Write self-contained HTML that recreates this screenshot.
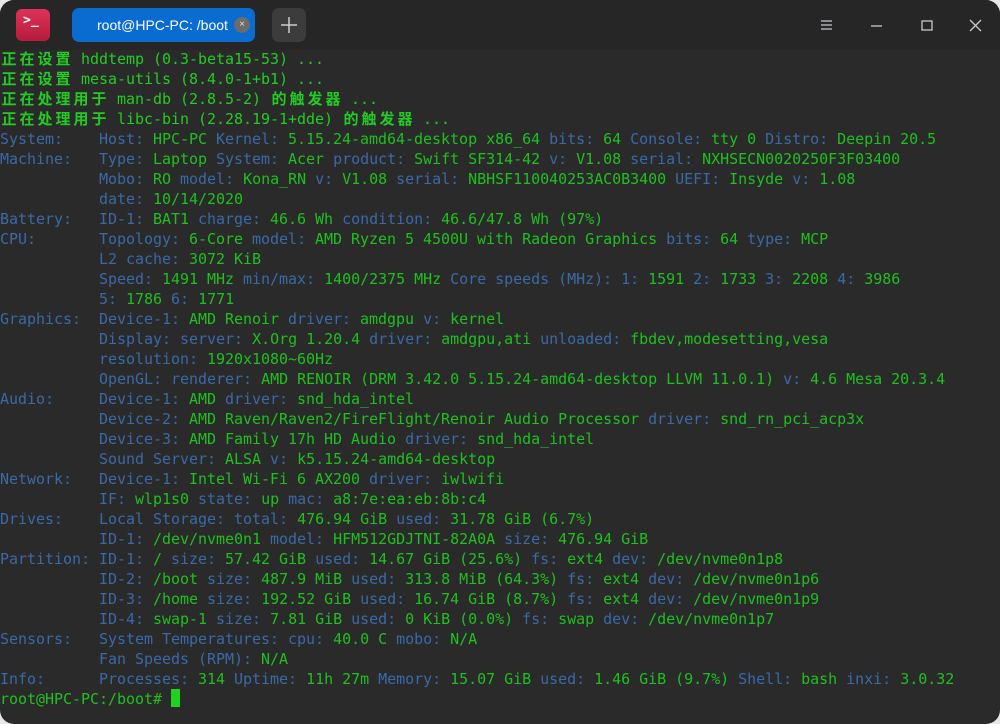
<!DOCTYPE html>
<html><head><meta charset="utf-8"><style>
html,body{margin:0;padding:0;background:#e8e8e8;}
.win{position:absolute;left:0;top:0;width:1000px;height:724px;background:#2a2a2a;border-radius:14px;overflow:hidden;}
.tb{position:absolute;left:0;top:0;width:1000px;height:50px;background:#262626;}
.logo{position:absolute;left:16px;top:9px;width:34px;height:32px;border-radius:6px;background:linear-gradient(#e0325a,#b51c3c);color:#fff;font:bold 13px "DejaVu Sans Mono",monospace;}
.tab{position:absolute;left:72px;top:8px;width:183px;height:34px;border-radius:7px;background:#0a6bd1;color:#fff;font:14px "Liberation Sans",sans-serif;line-height:34px;}
.tab span{position:absolute;left:25px;}
.x{position:absolute;left:162px;top:9px;width:16px;height:16px;border-radius:8px;background:#6b6b6b;color:#ddd;font:10px sans-serif;line-height:16px;text-align:center;}
.plus{position:absolute;left:272px;top:8px;width:34px;height:34px;border-radius:7px;background:#3c3c3c;}
.term{position:absolute;left:0;top:49px;font-family:"DejaVu Sans Mono","Noto Sans CJK SC",monospace;font-size:15px;letter-spacing:-0.03px;line-height:20px;white-space:pre;color:#1ec01e;}
.b{color:#3a69a8}.c{color:#22cc22}
.c i{font-style:normal;font-weight:bold;display:inline-block;width:18px;text-align:center;}
.cur{display:inline-block;width:9px;height:18px;background:#1ed21e;vertical-align:-3px;}
</style></head><body><div class="win">
<div class="tb">
<div class="logo"><span style="position:absolute;left:7px;top:4px">&gt;_</span></div>
<div class="tab"><span>root@HPC-PC: /boot</span><div class="x">×</div></div>
<div class="plus"><svg width="34" height="34" stroke="#ccc" stroke-width="1.5"><path d="M17 9v16M9 17h16"/></svg></div>
<svg style="position:absolute;left:815px;top:15px" width="175" height="20" fill="none" stroke="#c8c8d0" stroke-width="1.3">
<path d="M6 6h11M6 10h11M6 14h11"/><path d="M56 11h11"/><rect x="107" y="6" width="10" height="9"/><path d="M155 5l11 11M166 5l-11 11"/></svg>
</div>
<div class="term"><span class="c"><i>正</i><i>在</i><i>设</i><i>置</i> hddtemp (0.3-beta15-53) ...
<i>正</i><i>在</i><i>设</i><i>置</i> mesa-utils (8.4.0-1+b1) ...
<i>正</i><i>在</i><i>处</i><i>理</i><i>用</i><i>于</i> man-db (2.8.5-2) <i>的</i><i>触</i><i>发</i><i>器</i> ...
<i>正</i><i>在</i><i>处</i><i>理</i><i>用</i><i>于</i> libc-bin (2.28.19-1+dde) <i>的</i><i>触</i><i>发</i><i>器</i> ...</span>
<span class="b">System:    Host:</span> HPC-PC <span class="b">Kernel:</span> 5.15.24-amd64-desktop x86_64 <span class="b">bits:</span> 64 <span class="b">Console:</span> tty 0 <span class="b">Distro:</span> Deepin 20.5
<span class="b">Machine:   Type:</span> Laptop <span class="b">System:</span> Acer <span class="b">product:</span> Swift SF314-42 <span class="b">v:</span> V1.08 <span class="b">serial:</span> NXHSECN0020250F3F03400
           <span class="b">Mobo:</span> RO <span class="b">model:</span> Kona_RN <span class="b">v:</span> V1.08 <span class="b">serial:</span> NBHSF110040253AC0B3400 <span class="b">UEFI:</span> Insyde <span class="b">v:</span> 1.08
           <span class="b">date:</span> 10/14/2020
<span class="b">Battery:   ID-1:</span> BAT1 <span class="b">charge:</span> 46.6 Wh <span class="b">condition:</span> 46.6/47.8 Wh (97%)
<span class="b">CPU:       Topology:</span> 6-Core <span class="b">model:</span> AMD Ryzen 5 4500U with Radeon Graphics <span class="b">bits:</span> 64 <span class="b">type:</span> MCP
           <span class="b">L2 cache:</span> 3072 KiB
           <span class="b">Speed:</span> 1491 MHz <span class="b">min/max:</span> 1400/2375 MHz <span class="b">Core speeds (MHz): 1:</span> 1591 <span class="b">2:</span> 1733 <span class="b">3:</span> 2208 <span class="b">4:</span> 3986
           <span class="b">5:</span> 1786 <span class="b">6:</span> 1771
<span class="b">Graphics:  Device-1:</span> AMD Renoir <span class="b">driver:</span> amdgpu <span class="b">v:</span> kernel
           <span class="b">Display:</span> <span class="b">server:</span> X.Org 1.20.4 <span class="b">driver:</span> amdgpu,ati <span class="b">unloaded:</span> fbdev,modesetting,vesa
           <span class="b">resolution:</span> 1920x1080~60Hz
           <span class="b">OpenGL:</span> <span class="b">renderer:</span> AMD RENOIR (DRM 3.42.0 5.15.24-amd64-desktop LLVM 11.0.1) <span class="b">v:</span> 4.6 Mesa 20.3.4
<span class="b">Audio:     Device-1:</span> AMD <span class="b">driver:</span> snd_hda_intel
           <span class="b">Device-2:</span> AMD Raven/Raven2/FireFlight/Renoir Audio Processor <span class="b">driver:</span> snd_rn_pci_acp3x
           <span class="b">Device-3:</span> AMD Family 17h HD Audio <span class="b">driver:</span> snd_hda_intel
           <span class="b">Sound Server:</span> ALSA <span class="b">v:</span> k5.15.24-amd64-desktop
<span class="b">Network:   Device-1:</span> Intel Wi-Fi 6 AX200 <span class="b">driver:</span> iwlwifi
           <span class="b">IF:</span> wlp1s0 <span class="b">state:</span> up <span class="b">mac:</span> a8:7e:ea:eb:8b:c4
<span class="b">Drives:    Local Storage:</span> <span class="b">total:</span> 476.94 GiB <span class="b">used:</span> 31.78 GiB (6.7%)
           <span class="b">ID-1:</span> /dev/nvme0n1 <span class="b">model:</span> HFM512GDJTNI-82A0A <span class="b">size:</span> 476.94 GiB
<span class="b">Partition: ID-1:</span> / <span class="b">size:</span> 57.42 GiB <span class="b">used:</span> 14.67 GiB (25.6%) <span class="b">fs:</span> ext4 <span class="b">dev:</span> /dev/nvme0n1p8
           <span class="b">ID-2:</span> /boot <span class="b">size:</span> 487.9 MiB <span class="b">used:</span> 313.8 MiB (64.3%) <span class="b">fs:</span> ext4 <span class="b">dev:</span> /dev/nvme0n1p6
           <span class="b">ID-3:</span> /home <span class="b">size:</span> 192.52 GiB <span class="b">used:</span> 16.74 GiB (8.7%) <span class="b">fs:</span> ext4 <span class="b">dev:</span> /dev/nvme0n1p9
           <span class="b">ID-4:</span> swap-1 <span class="b">size:</span> 7.81 GiB <span class="b">used:</span> 0 KiB (0.0%) <span class="b">fs:</span> swap <span class="b">dev:</span> /dev/nvme0n1p7
<span class="b">Sensors:   System Temperatures:</span> <span class="b">cpu:</span> 40.0 C <span class="b">mobo:</span> N/A
           <span class="b">Fan Speeds (RPM):</span> N/A
<span class="b">Info:      Processes:</span> 314 <span class="b">Uptime:</span> 11h 27m <span class="b">Memory:</span> 15.07 GiB <span class="b">used:</span> 1.46 GiB (9.7%) <span class="b">Shell:</span> bash <span class="b">inxi:</span> 3.0.32
root@HPC-PC:/boot# <span class="cur"></span></div>
</div></body></html>
